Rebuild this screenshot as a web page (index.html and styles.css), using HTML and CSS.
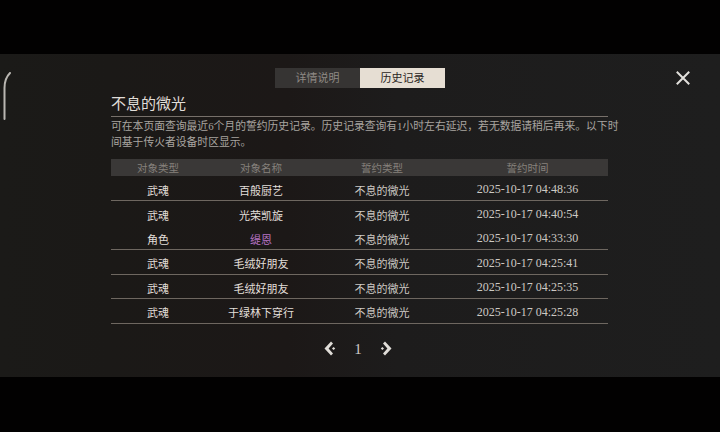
FILE: index.html
```html
<!DOCTYPE html>
<html lang="zh">
<head>
<meta charset="utf-8">
<link rel="stylesheet" href="styles.css">
</head>
<body>
<div class="topbar"></div>
<div class="panel">
  <svg class="curve" width="10" height="48" viewBox="0 0 10 48"><path d="M9 1 C5 5 3.5 9 3.5 16 L3.5 47" fill="none" stroke="#b9b6b1" stroke-width="2" stroke-linecap="round"/></svg>
  <svg class="close" width="14" height="14" viewBox="0 0 14 14"><path d="M1.5 1.5 L12.5 12.5 M12.5 1.5 L1.5 12.5" stroke="#e2e0dc" stroke-width="2" stroke-linecap="square"/></svg>
  <div class="tabs">
    <div class="tab">详情说明</div>
    <div class="tab active">历史记录</div>
  </div>
  <div class="content">
    <div class="title">不息的微光</div>
    <div class="desc">可在本页面查询最近6个月的誓约历史记录。历史记录查询有1小时左右延迟，若无数据请稍后再来。以下时间基于传火者设备时区显示。</div>
    <table class="records">
      <colgroup><col class="c1"><col class="c2"><col class="c3"><col class="c4"></colgroup>
      <thead>
        <tr><th>对象类型</th><th>对象名称</th><th>誓约类型</th><th>誓约时间</th></tr>
      </thead>
      <tbody>
        <tr class="line"><td>武魂</td><td>百般厨艺</td><td class="dim">不息的微光</td><td class="dim date">2025-10-17 04:48:36</td></tr>
        <tr><td>武魂</td><td>光荣凯旋</td><td class="dim">不息的微光</td><td class="dim date">2025-10-17 04:40:54</td></tr>
        <tr class="line"><td>角色</td><td class="purple">缇恩</td><td class="dim">不息的微光</td><td class="dim date">2025-10-17 04:33:30</td></tr>
        <tr class="line"><td>武魂</td><td>毛绒好朋友</td><td class="dim">不息的微光</td><td class="dim date">2025-10-17 04:25:41</td></tr>
        <tr class="line"><td>武魂</td><td>毛绒好朋友</td><td class="dim">不息的微光</td><td class="dim date">2025-10-17 04:25:35</td></tr>
        <tr class="line"><td>武魂</td><td>于绿林下穿行</td><td class="dim">不息的微光</td><td class="dim date">2025-10-17 04:25:28</td></tr>
      </tbody>
    </table>
    <div class="pager">
      <svg class="arrow" width="13" height="15" viewBox="0 0 13 15"><path d="M7 0.5 L0.5 7.5 L7 14.5 L9 12.5 L4.6 7.5 L9 2.5 Z" fill="#e0ddd8"/><path d="M9.6 6 L11.2 7.5 L9.6 9 L8 7.5 Z" fill="#e0ddd8"/></svg>
      <span class="page">1</span>
      <svg class="arrow" width="13" height="15" viewBox="0 0 13 15"><path d="M6 0.5 L12.5 7.5 L6 14.5 L4 12.5 L8.4 7.5 L4 2.5 Z" fill="#e0ddd8"/><path d="M3.4 6 L5 7.5 L3.4 9 L1.8 7.5 Z" fill="#e0ddd8"/></svg>
    </div>
  </div>
</div>
</body>
</html>
```
FILE: styles.css
```css
html, body {
  margin: 0;
  padding: 0;
  background: #020101;
  width: 720px;
  height: 432px;
  overflow: hidden;
  font-family: "Liberation Serif", "Noto Sans CJK SC", serif;
}
.topbar {
  height: 54px;
  background: #020101;
}
.panel {
  position: relative;
  height: 323px;
  background: linear-gradient(90deg, #1b1a18 0%, #1b1917 15%, #1c1817 40%, #1d1c1c 55%, #1e1e1e 100%);
  box-sizing: border-box;
  padding-top: 14px;
}
.curve {
  position: absolute;
  left: 1px;
  top: 18px;
}
.close {
  position: absolute;
  left: 676px;
  top: 17px;
}
.tabs {
  display: flex;
  justify-content: center;
}
.tab {
  width: 85px;
  height: 20px;
  line-height: 20px;
  text-align: center;
  font-size: 11px;
  color: #8f8a85;
  background: #363433;
}
.tab.active {
  background: #e6ded3;
  color: #2a2522;
}
.content {
  margin-left: 111px;
  width: 497px;
}
.title {
  margin-top: 6px;
  height: 22px;
  line-height: 21px;
  font-size: 15px;
  color: #e0ddd8;
  border-bottom: 1px solid #77706a;
}
.desc {
  margin-top: 1px;
  width: 512px;
  font-size: 10.8px;
  line-height: 16px;
  color: #a9a5a0;
}
.records {
  margin-top: 9px;
  width: 497px;
  border-collapse: collapse;
  table-layout: fixed;
}
.c1 { width: 94px; }
.c2 { width: 112px; }
.c3 { width: 130px; }
.c4 { width: 161px; }
.records th {
  height: 17px;
  padding: 0;
  background: #3a3837;
  font-weight: normal;
  font-size: 10.5px;
  color: #86817c;
  text-align: center;
}
.records td {
  height: 24.5px;
  padding: 3px 0 0;
  box-sizing: border-box;
  font-size: 11px;
  color: #e2dfda;
  text-align: center;
}
.records td.dim {
  color: #cdc9c4;
}
.records td.date {
  font-size: 12px;
}
.records td.purple {
  color: #b774c4;
}
.records tr.line td {
  border-bottom: 1px solid #6e6760;
}
.pager {
  margin-top: 17px;
  display: flex;
  justify-content: center;
  align-items: center;
  gap: 17px;
  margin-right: 3px;
}
.page {
  font-size: 15px;
  color: #cfcbc6;
  line-height: 16px;
}
```
